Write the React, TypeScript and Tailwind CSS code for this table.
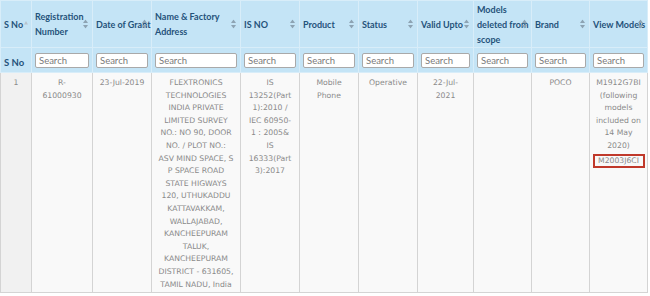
import React from 'react';

const headers: { label: string[]; width: number; sort?: 'asc' | 'both' }[] = [
  { label: ['S No'], width: 31, sort: 'asc' },
  { label: ['Registration', 'Number'], width: 61, sort: 'both' },
  { label: ['Date of Grant'], width: 59, sort: 'both' },
  { label: ['Name & Factory', 'Address'], width: 89, sort: 'both' },
  { label: ['IS NO'], width: 59, sort: 'both' },
  { label: ['Product'], width: 59, sort: 'both' },
  { label: ['Status'], width: 59, sort: 'both' },
  { label: ['Valid Upto'], width: 56, sort: 'both' },
  { label: ['Models', 'deleted from', 'scope'], width: 58, sort: 'both' },
  { label: ['Brand'], width: 58, sort: 'both' },
  { label: ['View Models'], width: 58, sort: 'both' },
];

const row: string[][] = [
  ['1'],
  ['R-', '61000930'],
  ['23-Jul-2019'],
  [
    'FLEXTRONICS',
    'TECHNOLOGIES',
    'INDIA PRIVATE',
    'LIMITED SURVEY',
    'NO.: NO 90, DOOR',
    'NO. / PLOT NO.:',
    'ASV MIND SPACE, S',
    'P SPACE ROAD',
    'STATE HIGWAYS',
    '120, UTHUKADDU',
    'KATTAVAKKAM,',
    'WALLAJABAD,',
    'KANCHEEPURAM',
    'TALUK,',
    'KANCHEEPURAM',
    'DISTRICT - 631605,',
    'TAMIL NADU, India',
  ],
  ['IS', '13252(Part', '1):2010 /', 'IEC 60950-', '1 : 2005&', 'IS', '16333(Part', '3):2017'],
  ['Mobile', 'Phone'],
  ['Operative'],
  ['22-Jul-', '2021'],
  [],
  ['POCO'],
  ['M1912G7BI', '(following', 'models', 'included on', '14 May', '2020)'],
];

const SortBoth = () => (
  <svg width="5" height="9" viewBox="0 0 5 9" className="absolute right-[4px] top-1/2 -translate-y-1/2">
    <path d="M2.5 0 L5 3.6 L0 3.6 Z" fill="#8da3b3" />
    <path d="M0 5.4 L5 5.4 L2.5 9 Z" fill="#8da3b3" />
  </svg>
);

const SortAsc = () => (
  <svg width="4" height="4" viewBox="0 0 4 4" className="inline-block align-top mt-[4px] ml-[1px]">
    <path d="M2 0 L4 3.5 L0 3.5 Z" fill="#b7c2cc" />
  </svg>
);

const App: React.FC = () => {
  return (
    <div className="w-[650px] h-[296px] bg-white overflow-hidden">
      <table className="table-fixed border-collapse w-[647px]">
        <colgroup>
          {headers.map((h, i) => (
            <col key={i} style={{ width: h.width }} />
          ))}
        </colgroup>
        <thead>
          <tr className="h-[47px] bg-[#c4e4f6]">
            {headers.map((h, i) => (
              <th
                key={i}
                className="relative border border-[#d8edf9] p-0 pl-[3px] text-left align-middle font-bold text-[9px] leading-[15px] text-[#24527a] whitespace-nowrap"
                style={{ fontFamily: 'Lato, "Open Sans", sans-serif' }}
              >
                {h.label.map((l, j) => (
                  <div key={j}>
                    {l}
                    {h.sort === 'asc' && <SortAsc />}
                  </div>
                ))}
                {h.sort === 'both' && <SortBoth />}
              </th>
            ))}
          </tr>
          <tr className="h-[16px] bg-[#c4e4f6]">
            {headers.map((_, i) => (
              <th
                key={i}
                className="border border-[#d8edf9] px-[3px] py-0 text-left align-middle"
                style={{ fontFamily: 'Lato, "Open Sans", sans-serif' }}
              >
                {i === 0 ? (
                  <span className="text-[9.5px] font-bold text-[#24527a]">S No</span>
                ) : (
                  <div className="h-[15px] w-full bg-white border border-[#a9a9a9] rounded-[2px] pl-[3px] text-[9.5px] leading-[13px] font-normal text-[#7a7a7a]">
                    Search
                  </div>
                )}
              </th>
            ))}
          </tr>
        </thead>
        <tbody>
          <tr className="h-[220px]">
            {row.map((lines, i) => (
              <td
                key={i}
                className={`border border-[#d4d4d4] px-[2px] pt-[4px] align-top text-center text-[7.7px] leading-[12.6px] text-[#8a8a8a] whitespace-nowrap ${
                  i === 0 ? 'bg-[#f1f1f1]' : 'bg-[#f9f9f9]'
                }`}
                style={{ fontFamily: '"DejaVu Sans", Verdana, sans-serif' }}
              >
                {lines.map((l, j) => (
                  <div key={j}>{l}</div>
                ))}
                {i === 10 && (
                  <div className="mx-auto mt-[1px] w-[52px] border-2 border-[#c0392b] leading-[10px]">M2003J6CI</div>
                )}
              </td>
            ))}
          </tr>
        </tbody>
      </table>
    </div>
  );
};

export default App;
